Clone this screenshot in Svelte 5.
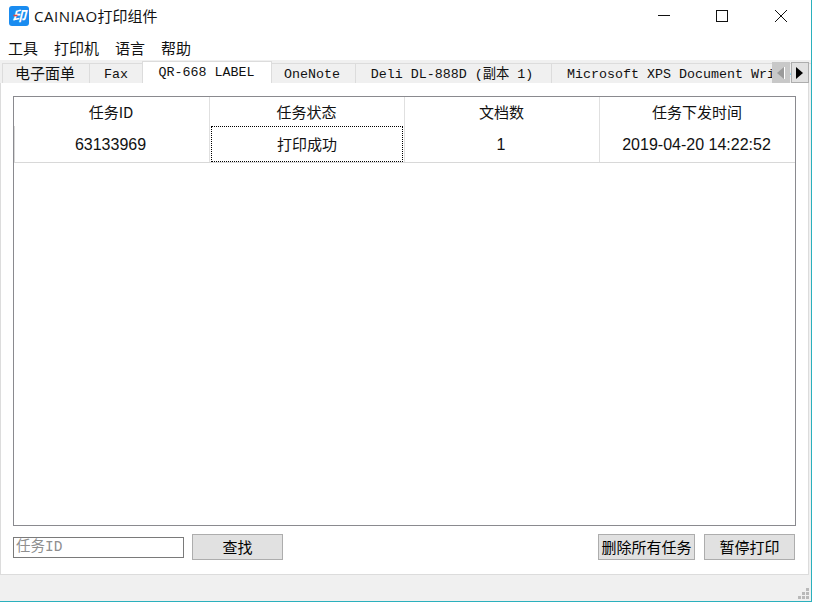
<script>
  const menus = ['工具', '打印机', '语言', '帮助'];
  const tabs = [
    { label: '电子面单', cls: 'cjk' },
    { label: 'Fax', cls: 'fax' },
    { label: 'QR-668 LABEL', cls: 'active' },
    { label: 'OneNote', cls: 'onenote' },
    { label: 'Deli DL-888D (副本 1)', cls: 'deli' },
    { label: 'Microsoft XPS Document Writer', cls: 'xps' }
  ];
  const cols = ['任务ID', '任务状态', '文档数', '任务下发时间'];
  const row = ['63133969', '打印成功', '1', '2019-04-20 14:22:52'];
</script>

<div class="window">
  <header class="title">
    <svg class="logo" viewBox="0 0 20 20" width="20" height="20" aria-hidden="true">
      <rect width="20" height="20" rx="3" fill="#1a8cf0" />
      <text x="10" y="15" text-anchor="middle" font-size="14" font-weight="700" font-style="italic" fill="#fff" font-family="Noto Sans CJK SC, sans-serif">印</text>
      <path d="M4.5 9.5h4" stroke="#e8453c" stroke-width="1.6" />
    </svg>
    <span class="title-text"><span class="latin">CAINIAO</span>打印组件</span>
    <div class="controls">
      <svg viewBox="0 0 58 30" width="58" height="30" aria-hidden="true"><path d="M21 15.5h12" stroke="#111" fill="none" /></svg>
      <svg viewBox="0 0 58 30" width="58" height="30" aria-hidden="true"><rect x="21.5" y="10.5" width="11" height="11" stroke="#111" fill="none" /></svg>
      <svg viewBox="0 0 58 30" width="58" height="30" aria-hidden="true"><path d="M22 10l12 12M34 10l-12 12" stroke="#111" fill="none" /></svg>
    </div>
  </header>

  <nav class="menu">
    {#each menus as m}<span>{m}</span>{/each}
  </nav>

  <div class="client">
    <div class="tabbar">
      {#each tabs as t}
        <div class="tab {t.cls}">{t.label}</div>
      {/each}
      <div class="scroller">
        <button class="arrow off" aria-label="prev"><svg width="8" height="12" viewBox="0 0 8 12"><path d="M7 0v12L0 6z" fill="#9a9a9a" /><path d="M7.5 0v12" stroke="#fff" /></svg></button>
        <button class="arrow" aria-label="next"><svg width="8" height="12" viewBox="0 0 8 12"><path d="M0 0v12l7-6z" fill="#000" /></svg></button>
      </div>
    </div>

    <main class="panel">
      <div class="table">
        <div class="grid head">
          {#each cols as c}<div class="cell">{c}</div>{/each}
        </div>
        <div class="grid body">
          {#each row as v, i}<div class="cell"><span class:focus={i === 1}>{v}</span></div>{/each}
        </div>
      </div>
      <div class="footer">
        <input class="search" placeholder="任务ID" />
        <button class="btn find">查找</button>
        <div class="spacer"></div>
        <button class="btn del">删除所有任务</button>
        <button class="btn pause">暂停打印</button>
      </div>
    </main>

    <footer class="status">
      <svg class="grip" width="12" height="12" viewBox="0 0 12 12" aria-hidden="true">
        <g fill="#b9b9b9"><rect x="8" y="0" width="3" height="3" /><rect x="4" y="4" width="3" height="3" /><rect x="8" y="4" width="3" height="3" /><rect x="0" y="8" width="3" height="3" /><rect x="4" y="8" width="3" height="3" /><rect x="8" y="8" width="3" height="3" /></g>
      </svg>
    </footer>
  </div>
</div>

<style>
  :global(body) { margin: 0; background: #fff; }
  .window {
    width: 812px; height: 602px; box-sizing: border-box;
    border-right: 1px solid #2bb0bd; border-bottom: 1px solid #2bb0bd;
    background: #fff; display: flex; flex-direction: column; overflow: hidden;
    font-family: "Noto Sans CJK SC", sans-serif; color: #111;
  }
  .title { height: 38px; flex: none; display: flex; align-items: flex-start; padding: 6px 0 0 9px; box-sizing: border-box; position: relative; }
  .title-text { margin-left: 5px; font-size: 15px; line-height: 20px; font-family: "Open Sans", "Noto Sans CJK SC", sans-serif; }
  .latin { letter-spacing: 0.55px; }
  .controls { position: absolute; right: 0; top: 0; display: flex; }
  .menu { height: 22px; flex: none; display: flex; gap: 16px; padding-left: 8px; font-size: 15px; line-height: 20px; }
  .client { flex: 1; min-height: 0; display: flex; flex-direction: column; background: #f0f0f0; }
  .tabbar { height: 23px; flex: none; display: flex; padding-left: 2px; position: relative; overflow: hidden; }
  .tab {
    flex: none; box-sizing: border-box; height: 21px; margin-top: 3px;
    border: 1px solid #dcdcdc; border-left-width: 0; border-bottom-width: 0;
    font: 13.33px/21px "Liberation Mono", "Noto Sans CJK SC", monospace;
    text-align: center; white-space: nowrap; overflow: hidden;
  }
  .cjk { width: 88px; border-left-width: 1px; padding-right: 2px; font-family: "Noto Sans CJK SC", sans-serif; font-size: 15px; line-height: 18px; }
  .fax { width: 53px; }
  .active { width: 130px; margin-left: -1px; padding-right: 1px; height: 23px; margin-top: 1px; background: #fff; border-left-width: 1px; line-height: 22px; }
  .onenote { width: 84px; padding-right: 3px; }
  .deli { width: 196px; padding-right: 3px; }
  .xps { width: 260px; text-align: left; padding-left: 15px; }
  .scroller { position: absolute; right: 2px; top: 2px; display: flex; gap: 1px; }
  .arrow { width: 18px; height: 21px; padding: 0; box-sizing: border-box; border: 1px solid #adadad; background: #e1e1e1; display: flex; align-items: center; justify-content: center; }
  .arrow.off { background: #c8c8c8; border-color: #c8c8c8; }
  .panel {
    flex: none; height: 492px; box-sizing: border-box; background: #fff; margin-right: 2px;
    border: 1px solid #dcdcdc; border-top: 0;
    padding: 13px 12px 6px; display: flex; flex-direction: column;
  }
  .table { flex: 1; box-sizing: border-box; border: 1px solid #8a8a8f; min-height: 0; }
  .grid { display: grid; grid-template-columns: 196px 195px 195px 195px; }
  .cell { text-align: center; box-sizing: border-box; border-right: 1px solid #e0e0e0; }
  .cell:last-child { border-right: 0; }
  .head { height: 29px; }
  .head .cell { font-size: 15px; line-height: 29px; padding-right: 1px; font-family: "Noto Sans CJK SC", sans-serif; }
  .body { height: 37px; box-sizing: border-box; border-bottom: 1px solid #d8d8d8; }
  .body .cell { display: flex; padding: 0 1px; font: 16px "Liberation Sans", "Noto Sans CJK SC", sans-serif; }
  .body .cell:first-child { border-left: 1px solid #d8d8d8; padding: 0 3px 0 0; }
  .body .cell:nth-child(3) { padding: 0 2px 0 0; }
  .body .cell:last-child { padding: 0 2px 0 0; }
  .body .cell span { flex: 1; line-height: 35px; height: 36px; box-sizing: border-box; border: 1px dotted transparent; }
  .body .cell span.focus { border-color: #000; font-size: 15px; line-height: 33px; font-family: "Noto Sans CJK SC", sans-serif; }
  .footer { flex: none; height: 42px; display: flex; align-items: center; box-sizing: border-box; }
  .search {
    width: 171px; height: 21px; box-sizing: border-box; padding: 0 2px; margin: 0;
    border: 1px solid #7a7a7a; outline: none; font: 14.5px "Liberation Mono", "Noto Sans CJK SC", monospace;
  }
  .search::placeholder { color: #8f8f8f; }
  .btn {
    height: 26px; box-sizing: border-box; padding: 0; border: 1px solid #adadad; background: #e1e1e1;
    font: 15px/22px "Noto Sans CJK SC", sans-serif; color: #000;
  }
  .find { width: 91px; margin-left: 8px; }
  .spacer { flex: 1; }
  .del { width: 97px; }
  .pause { width: 91px; margin: 0 1px 0 9px; }
  .status { flex: 1; position: relative; }
  .grip { position: absolute; right: 1px; bottom: 1px; }
</style>
